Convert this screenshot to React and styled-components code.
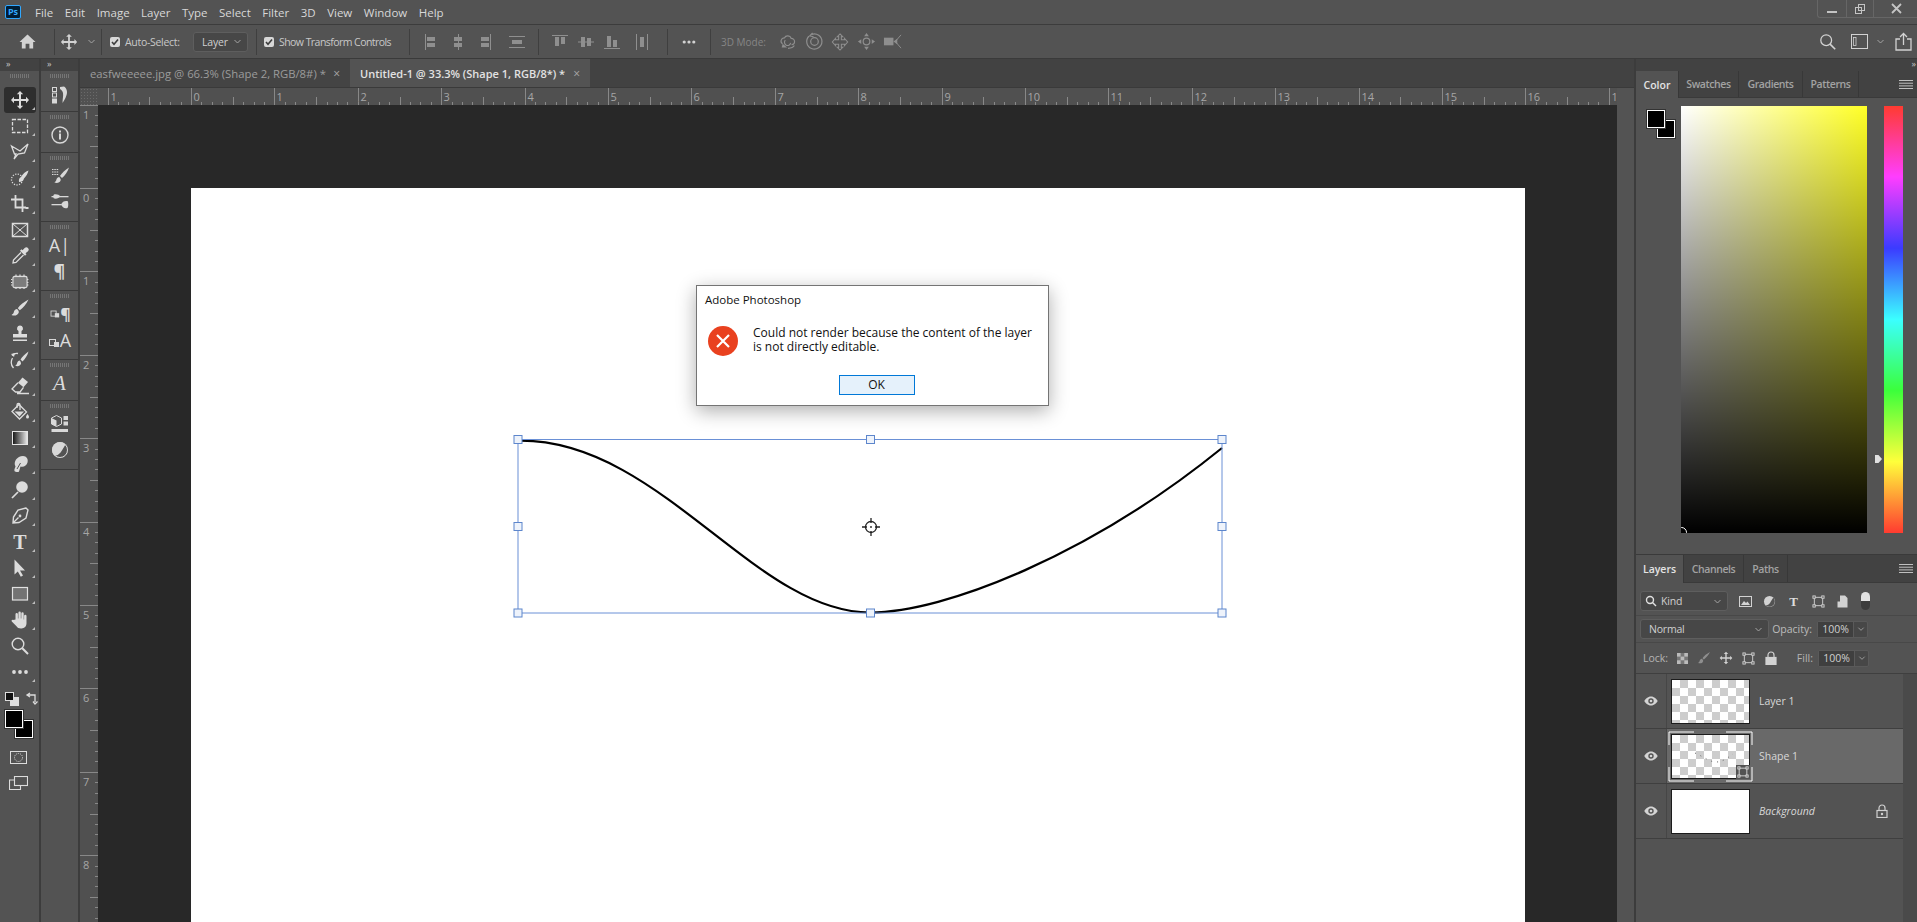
import React from 'react';
import styled, { createGlobalStyle } from 'styled-components';

const GlobalStyle = createGlobalStyle`
  html, body { margin: 0; padding: 0; background: #535353; }
  * { box-sizing: border-box; }
  body { font-family: "Open Sans", "Liberation Sans", sans-serif; overflow: hidden; }
`;

const Page = styled.div`
  width: 1917px;
  height: 922px;
  display: flex;
  flex-direction: column;
  background: #535353;
  color: #d8d8d8;
  overflow: hidden;
`;

/* ---------- menu bar ---------- */
const MenuBar = styled.div`
  height: 25px;
  flex: none;
  display: flex;
  align-items: center;
  border-bottom: 1px solid #3c3c3c;
  padding-left: 5px;
  font-size: 11.5px;
`;
const PsLogo = styled.div`
  width: 16px;
  height: 14px;
  border: 1px solid #31a8ff;
  border-radius: 2px;
  background: #001e36;
  color: #31a8ff;
  font-size: 9px;
  font-weight: 700;
  line-height: 12px;
  text-align: center;
  margin-right: 14px;
`;
const MenuItems = styled.div`
  display: flex;
  gap: 11.5px;
`;
const WindowControls = styled.div`
  margin-left: auto;
  width: 100px;
  height: 18px;
  align-self: flex-start;
  display: grid;
  grid-template-columns: 28px 27px 45px;
  border-left: 1px solid #666;
  border-bottom: 1px solid #666;
  border-radius: 0 0 0 3px;
`;
const WindowButton = styled.div`
  display: flex;
  align-items: center;
  justify-content: center;
  color: #c4c4c4;
  & + & { border-left: 1px solid #666; }
`;

/* ---------- options bar ---------- */
const OptionsBar = styled.div`
  height: 34px;
  flex: none;
  display: flex;
  align-items: center;
  border-bottom: 1px solid #3a3a3a;
  font-size: 11px;
`;
const Slot = styled.div`
  width: ${p => p.$w || 26}px;
  margin-left: ${p => p.$ml || 0}px;
  flex: none;
  display: flex;
  align-items: center;
  justify-content: center;
  color: ${p => p.$dim ? '#8e8e8e' : '#d2d2d2'};
`;
const Sep = styled.div`
  width: 1px;
  height: 26px;
  flex: none;
  margin-left: ${p => p.$ml || 0}px;
  background: #3f3f3f;
`;
const CheckLabel = styled.div`
  width: ${p => p.$w}px;
  margin-left: ${p => p.$ml}px;
  flex: none;
  display: flex;
  align-items: center;
  gap: 5px;
  white-space: nowrap;
  color: #c8c8c8;
  font-size: 10.5px;
  letter-spacing: ${p => p.$ls}px;
`;
const Check = styled.span`
  width: 10px;
  height: 10px;
  flex: none;
  border-radius: 2px;
  background: #d8d8d8;
  color: #3c3c3c;
  display: flex;
  align-items: center;
  justify-content: center;
`;
const Dropdown = styled.div`
  width: ${p => p.$w}px;
  height: ${p => p.$h || 20}px;
  margin-left: ${p => p.$ml || 0}px;
  flex: none;
  display: flex;
  align-items: center;
  justify-content: space-between;
  padding: 0 5px 0 ${p => p.$pl || 8}px;
  background: #474747;
  border: 1px solid #5e5e5e;
  border-radius: 3px;
  color: #d0d0d0;
  font-size: 10.5px;
  letter-spacing: -0.2px;
`;
const DimLabel = styled.div`
  width: 42px;
  margin-left: 10px;
  flex: none;
  color: #868686;
  font-size: 10px;
  white-space: nowrap;
`;
const Spacer = styled.div`
  flex: 1;
`;

/* ---------- workspace ---------- */
const Workspace = styled.div`
  flex: 1;
  min-height: 0;
  display: flex;
`;
const DockColumn = styled.div`
  width: ${p => p.$w}px;
  flex: none;
  display: flex;
  flex-direction: column;
  background: #535353;
  border-right: 2px solid #3c3c3c;
`;
const CollapseStrip = styled.div`
  height: 12px;
  flex: none;
  background: #424242;
  color: #c8c8c8;
  font-size: 9px;
  line-height: 10px;
  padding: 0 ${p => p.$right ? '2px' : '0'} 0 ${p => p.$right ? '0' : '6px'};
  text-align: ${p => p.$right ? 'right' : 'left'};
  letter-spacing: -1px;
`;
const Grip = styled.div`
  width: 19px;
  height: 4px;
  margin: 3px auto 0;
  flex: none;
  background: repeating-linear-gradient(90deg, #757575 0 1px, transparent 1px 2px);
`;
const ToolList = styled.div`
  display: flex;
  flex-direction: column;
  margin-top: 9px;
`;
const ToolSlot = styled.div`
  position: relative;
  height: 26px;
  margin: 0 3px 0 4px;
  display: flex;
  align-items: center;
  justify-content: center;
  border-radius: 3px;
  color: #dcdcdc;
  background: ${p => p.$active ? '#2e2e2e' : 'transparent'};
  &::after {
    content: '';
    display: ${p => p.$corner ? 'block' : 'none'};
    position: absolute;
    right: 1px;
    bottom: 3px;
    border-style: solid;
    border-width: 0 0 3px 3px;
    border-color: transparent transparent #bdbdbd transparent;
  }
`;
const TypeGlyph = styled.span`
  font-family: ${p => p.$serif ? '"Liberation Serif", serif' : '"Open Sans", sans-serif'};
  font-size: ${p => p.$size}px;
  font-weight: ${p => p.$bold ? 700 : 400};
  font-style: ${p => p.$italic ? 'italic' : 'normal'};
  line-height: 1;
  color: #dcdcdc;
`;
const GlyphPair = styled.span`
  display: flex;
  align-items: ${p => p.$end ? 'flex-end' : 'center'};
`;
const ColorBlock = styled.div`
  padding-left: 5px;
  height: 22px;
  margin-top: 3px;
  display: flex;
  align-items: center;
  gap: 6px;
  color: #dcdcdc;
`;
const SwatchStack = styled.div`
  position: relative;
  width: 29px;
  height: 29px;
  margin: 0 0 0 5px;
`;
const Swatch = styled.div`
  position: absolute;
  left: ${p => p.$x}px;
  top: ${p => p.$y}px;
  width: 18px;
  height: 18px;
  background: #000;
  border: 1px solid #fff;
  box-shadow: 0 0 0 1px #333;
`;
const LowerIcon = styled.div`
  height: 26px;
  display: flex;
  align-items: center;
  justify-content: center;
  color: #dcdcdc;
  margin: ${p => p.$mt || 0}px 3px 0 0;
`;
const PanelGroup = styled.div`
  height: ${p => p.$h}px;
  flex: none;
  border-bottom: 1px solid #3a3a3a;
  display: flex;
  flex-direction: column;
`;
const PanelIcons = styled.div`
  margin-top: 3px;
  display: flex;
  flex-direction: column;
`;
const PanelIcon = styled.div`
  height: ${p => p.$h || 26}px;
  display: flex;
  align-items: center;
  justify-content: center;
  color: #d8d8d8;
`;

/* ---------- document area ---------- */
const DocArea = styled.div`
  flex: 1;
  min-width: 0;
  display: flex;
  flex-direction: column;
`;
const TabBar = styled.div`
  height: 29px;
  flex: none;
  display: flex;
  background: #424242;
  border-bottom: 1px solid #3a3a3a;
`;
const DocTab = styled.div`
  width: ${p => p.$w}px;
  flex: none;
  display: flex;
  align-items: center;
  justify-content: space-between;
  padding: 0 10px;
  font-size: ${p => p.$active ? 11 : 11.3}px;
  white-space: nowrap;
  font-weight: ${p => p.$active ? 600 : 400};
  background: ${p => p.$active ? '#535353' : '#444444'};
  color: ${p => p.$active ? '#e2e2e2' : '#9c9c9c'};
`;
const TabClose = styled.span`
  font-size: 12px;
  font-weight: 400;
  color: #a8a8a8;
`;
const DocBody = styled.div`
  flex: 1;
  min-height: 0;
  display: flex;
`;
const Viewport = styled.div`
  flex: 1;
  min-width: 0;
  display: grid;
  grid-template-columns: 18px 1fr;
  grid-template-rows: 17px 1fr;
`;
const RulerCorner = styled.div`
  background: #515151;
  background-image: radial-gradient(#6a6a6a 0.6px, transparent 0.7px);
  background-size: 3px 3px;
`;
const RulerBox = styled.div`
  background: #505050;
  overflow: hidden;
  svg { display: block; }
`;
const Pasteboard = styled.div`
  background: #282828;
  padding: 83px 0 0 93px;
  overflow: hidden;
`;
const Sheet = styled.div`
  position: relative;
  width: 1334px;
  height: 800px;
  background: #fff;
`;
const ScrollTrack = styled.div`
  width: 17px;
  flex: none;
  background: #535353;
`;
const ShapeOverlay = styled.svg`
  position: absolute;
  left: 0;
  top: 0;
`;
const Dialog = styled.div`
  position: absolute;
  left: 505px;
  top: 97px;
  width: 353px;
  height: 121px;
  background: #fff;
  border: 1px solid #747474;
  box-shadow: 0 5px 18px rgba(0, 0, 0, 0.32);
  color: #111;
  display: flex;
  flex-direction: column;
`;
const DialogTitle = styled.div`
  height: 29px;
  padding: 6px 0 0 8px;
  font-size: 11.5px;
`;
const DialogBody = styled.div`
  display: flex;
  padding: 11px 0 0 11px;
  gap: 15px;
`;
const DialogText = styled.div`
  font-size: 12px;
  line-height: 14px;
`;
const DialogFooter = styled.div`
  margin-top: auto;
  padding: 0 0 10px 8px;
  display: flex;
  justify-content: center;
`;
const OkButton = styled.div`
  width: 76px;
  height: 20px;
  background: #e5f1fb;
  border: 1px solid #0078d7;
  font-size: 12px;
  line-height: 18px;
  text-align: center;
`;

/* ---------- right dock ---------- */
const RightDock = styled.div`
  width: 283px;
  flex: none;
  display: flex;
  flex-direction: column;
  border-left: 2px solid #3c3c3c;
`;
const PanelTabs = styled.div`
  height: ${p => p.$h}px;
  flex: none;
  display: flex;
  background: #424242;
  position: relative;
  border-bottom: 1px solid #3a3a3a;
`;
const PanelTab = styled.div`
  width: ${p => p.$w}px;
  flex: none;
  display: flex;
  align-items: center;
  justify-content: center;
  font-size: 10.5px;
  font-weight: 600;
  letter-spacing: ${p => p.$active ? 0 : -0.4}px;
  background: ${p => p.$active ? '#535353' : 'transparent'};
  color: ${p => p.$active ? '#e4e4e4' : '#a2a2a2'};
  border-right: 1px solid #383838;
  margin-bottom: ${p => p.$active ? '-1px' : 0};
`;
const PanelMenu = styled.div`
  margin-left: auto;
  width: 22px;
  display: flex;
  align-items: center;
  justify-content: center;
  color: #c0c0c0;
`;
const ColorBody = styled.div`
  height: 457px;
  flex: none;
  position: relative;
  display: flex;
  padding: 8px 0 0 11px;
  border-bottom: 1px solid #3a3a3a;
`;
const SwatchPair = styled.div`
  position: relative;
  width: 34px;
  height: 32px;
  flex: none;
  margin-top: 4px;
`;
const PickerField = styled.div`
  width: 186px;
  height: 427px;
  flex: none;
  position: relative;
  background:
    linear-gradient(to bottom, rgba(0, 0, 0, 0), #000),
    linear-gradient(to right, #fff, #ffff26);
`;
const PickerDot = styled.div`
  position: absolute;
  left: -5px;
  bottom: -5px;
  width: 11px;
  height: 11px;
  border: 1px solid #fff;
  border-radius: 50%;
  clip-path: inset(0 0 5px 5px);
`;
const HueBar = styled.div`
  width: 19px;
  height: 427px;
  margin-left: 17px;
  flex: none;
  position: relative;
  background: linear-gradient(to bottom, #ff3b30, #ff3dff 16.6%, #3b3bff 33.3%, #3bffff 50%, #3bff3b 66.6%, #ffff3b 83.3%, #ff3b30);
`;
const HueMark = styled.div`
  position: absolute;
  left: -9px;
  top: 349px;
  width: 7px;
  height: 8px;
  background: #e0e0e0;
  clip-path: polygon(0 0, 50% 0, 100% 50%, 50% 100%, 0 100%);
`;
const LayersBody = styled.div`
  flex: 1;
  min-height: 0;
  display: flex;
  flex-direction: column;
`;
const FilterRow = styled.div`
  height: 33px;
  flex: none;
  display: flex;
  align-items: center;
  padding: 4px 0 0 4px;
  border-bottom: 1px solid #484848;
`;
const BlendRow = styled.div`
  height: 27px;
  flex: none;
  display: flex;
  align-items: center;
  padding-left: 4px;
  border-bottom: 1px solid #484848;
  font-size: 10.5px;
  color: #bcbcbc;
`;
const LockRow = styled.div`
  height: 31px;
  flex: none;
  display: flex;
  align-items: center;
  padding-left: 7px;
  border-bottom: 1px solid #3f3f3f;
  font-size: 10.5px;
  color: #b4b4b4;
`;
const KindLabel = styled.span`
  display: flex;
  align-items: center;
  gap: 4px;
`;
const ToggleKnob = styled.div`
  width: 9px;
  height: 18px;
  margin-left: 7px;
  border-radius: 5px;
  background: linear-gradient(to bottom, #e2e2e2 0 9px, #3c3c3c 9px);
`;
const FieldLabel = styled.div`
  width: ${p => p.$w}px;
  margin-left: ${p => p.$ml || 0}px;
  flex: none;
  text-align: ${p => p.$left ? 'left' : 'right'};
  white-space: nowrap;
`;
const PercentField = styled.div`
  width: 51px;
  height: 17px;
  margin-left: 5px;
  flex: none;
  display: flex;
  background: #474747;
  border: 1px solid #5a5a5a;
  border-radius: 2px;
  font-size: 10.5px;
  color: #d0d0d0;
  line-height: 15px;
`;
const PercentValue = styled.div`
  width: 36px;
  text-align: center;
  background: #3f3f3f;
  border-right: 1px solid #5a5a5a;
`;
const PercentArrow = styled.div`
  flex: 1;
  display: flex;
  align-items: center;
  justify-content: center;
`;
const LayerList = styled.div`
  flex: 1;
  display: flex;
`;
const LayerRows = styled.div`
  flex: 1;
`;
const LayerGutter = styled.div`
  width: 14px;
  flex: none;
  background: #4a4a4a;
`;
const LayerRow = styled.div`
  height: 55px;
  display: flex;
  align-items: center;
  border-bottom: 1px solid #3f3f3f;
`;
const EyeCell = styled.div`
  width: 31px;
  height: 100%;
  flex: none;
  display: flex;
  align-items: center;
  justify-content: center;
  color: #d4d4d4;
  border-right: 1px solid #464646;
`;
const LayerMain = styled.div`
  flex: 1;
  height: 100%;
  display: flex;
  align-items: center;
  padding: 0 15px 0 4px;
  background: ${p => p.$selected ? '#696969' : 'transparent'};
`;
const Thumb = styled.div`
  width: 79px;
  height: 45px;
  flex: none;
  position: relative;
  border: 1px solid #1c1c1c;
  background: ${p => p.$plain ? '#fff' : 'repeating-conic-gradient(#cdcdcd 0 25%, #fff 0 50%) 0 0 / 16px 16px'};
`;
const ThumbOverlay = styled.svg`
  position: absolute;
  left: -4px;
  top: -4px;
`;
const ThumbCurveLayer = styled.svg`
  position: absolute;
  left: 0;
  top: 0;
`;
const SmartBadge = styled.div`
  position: absolute;
  right: -1px;
  bottom: -1px;
  width: 14px;
  height: 14px;
  background: #535353;
  display: flex;
  align-items: center;
  justify-content: center;
  color: #e4e4e4;
`;
const LayerName = styled.div`
  margin-left: 9px;
  font-size: 10.5px;
  color: #d8d8d8;
  font-style: ${p => p.$italic ? 'italic' : 'normal'};
`;
const LayerLock = styled.div`
  margin-left: auto;
  color: #d0d0d0;
  display: flex;
`;

/* ---------- icons ---------- */
const Ico = ({ s = 20, vb = '0 0 20 20', children }) => (
  <svg width={s} height={s} viewBox={vb} fill="currentColor">{children}</svg>
);
const Line = (props) => <path fill="none" stroke="currentColor" strokeWidth="1.3" {...props} />;

const Chevron = ({ size = 9 }) => (
  <svg width={size} height={size} viewBox="0 0 9 9" fill="none" stroke="#a4a4a4"><path d="M1.5 3l3 3 3-3" /></svg>
);

const MoveGlyph = ({ s = 20 }) => (
  <Ico s={s}><path d="M10 1l3.2 3.2h-2.2V9h5V6.8L19 10l-3 3.2V11h-5v4.8h2.2L10 19l-3.2-3.2H9V11H4v2.2L1 10l3-3.2V9h5V4.2H6.8z" /></Ico>
);
const BrushGlyph = ({ s = 20 }) => (
  <Ico s={s}><path d="M18.5 1.5C14 4 10 7 7.8 10.2l2 2C13 10 16.5 6 18.5 1.5zM6.8 11c-2 .3-2.8 2-3 3.3-.2 1-1 2-2.3 2.7 3 1.3 6.3.5 7.3-2.5.3-1.2-.8-3-2-3.5z" /></Ico>
);
const EyeGlyph = () => (
  <svg width="14" height="10" viewBox="0 0 14 10" fill="currentColor"><path d="M7 .5C3.8.5 1.3 3 .3 5c1 2 3.5 4.5 6.7 4.5S12.700 7 13.700 5C12.700 3 10.200.5 7 .5zm0 1.800a2.700 2.700 0 110 5.400 2.700 2.700 0 010-5.400z" /><circle cx="7" cy="5" r="1.3" /></svg>
);
const LockGlyph = ({ open }) => (
  <svg width="12" height="14" viewBox="0 0 12 14" fill={open ? 'none' : 'currentColor'} stroke="currentColor" strokeWidth="1.2">
    <path d="M3 6.5V4a3 3 0 016 0v2.5" fill="none" /><rect x="1" y="6.5" width="10" height="7" />
    {open && <circle cx="6" cy="10" r=".6" fill="currentColor" />}
  </svg>
);
const Hamburger = () => (
  <svg width="14" height="9" viewBox="0 0 14 9" fill="currentColor"><rect y="0" width="14" height="1" /><rect y="2.7" width="14" height="1" /><rect y="5.4" width="14" height="1" /><rect y="8" width="14" height="1" /></svg>
);
const TransformGlyph = ({ s = 14 }) => (
  <svg width={s} height={s} viewBox="0 0 14 14" fill="none" stroke="currentColor"><rect x="2.5" y="2.5" width="9" height="9" /><rect x="1" y="1" width="2.5" height="2.5" fill="#535353" /><rect x="10.5" y="1" width="2.5" height="2.5" fill="#535353" /><rect x="1" y="10.5" width="2.5" height="2.5" fill="#535353" /><rect x="10.5" y="10.5" width="2.5" height="2.5" fill="#535353" /></svg>
);

// option bar align icons, drawn as a rule with two bars
const AlignH = ({ rule, a, b }) => (
  <svg width="16" height="16" viewBox="0 0 16 16" fill="#8f8f8f"><rect x={rule} y="0" width="1" height="16" /><rect x={a} y="3" width="8" height="4" /><rect x={b} y="9" width="8" height="4" /></svg>
);
const AlignV = ({ rule, a, b }) => (
  <svg width="16" height="16" viewBox="0 0 16 16" fill="#8f8f8f"><rect y={rule} x="0" width="16" height="1" /><rect y={a} x="3" width="4" height="9" /><rect y={b} x="9" width="4" height="7" /></svg>
);

const tools = [
  { key: 'move', active: true, icon: <MoveGlyph /> },
  { key: 'marquee', icon: <Ico><rect x="2.5" y="3.5" width="15" height="13" fill="none" stroke="currentColor" strokeWidth="1.3" strokeDasharray="3.5 1.5" /></Ico> },
  { key: 'lasso', icon: <Ico><Line d="M1.5 4l8.500 5 8-7-3.500 9-6.500 1-4 5 2-5-1.500 0z" /></Ico> },
  { key: 'quick', icon: <Ico><circle cx="7" cy="11.5" r="5.5" fill="none" stroke="currentColor" strokeWidth="1.3" strokeDasharray="1.2 1.4" /><path d="M18.5 2.5c-3 1-6 3.800-7.500 6.500-1.500.5-2.500 2.500-2 5 2.500 0 4.500-1 5-3.500 2-2 3.800-5 4.500-8z" /></Ico> },
  { key: 'crop', icon: <Ico><path fill="none" stroke="currentColor" strokeWidth="1.8" d="M5.5 1v12.500H16M1 5.500h11.500V18M15.500 14h3" /></Ico> },
  { key: 'frame', icon: <Ico><rect x="2.5" y="3.5" width="15" height="13" fill="none" stroke="currentColor" strokeWidth="1.5" /><Line strokeWidth="1" d="M3 4l14 12M17 4L3 16" /></Ico> },
  { key: 'dropper', icon: <Ico><path d="M18 2a2.300 2.300 0 00-3.300 0l-2.200 2.200-1-1-1.500 1.500 5 5 1.500-1.500-1-1L18 5.300a2.300 2.300 0 000-3.300z" /><Line d="M11 6.500L3.500 14l-.5 3 3-.5L13.500 9" /></Ico> },
  { key: 'healing', icon: <Ico><rect x="4" y="5.5" width="12" height="9" fill="#7c7c7c" /><rect x="3" y="4.5" width="14" height="11" rx="1.5" fill="none" stroke="currentColor" strokeWidth="1.3" /><Line strokeWidth="1.2" strokeDasharray="1.4 1.6" d="M1 7.500H3M1 10.500H3M1 13H3M17 7.500H19M17 10.500H19M17 13H19M6 2.500V4.500M10 2.500V4.500M14 2.500V4.500M6 15.500V17.500M10 15.500V17.500M14 15.500V17.500" /></Ico> },
  { key: 'brush', icon: <BrushGlyph /> },
  { key: 'stamp', icon: <Ico><path d="M10 1.5a3 3 0 011.500 5.600V10H17v3.500H3V10h5.500V7.100A3 3 0 0110 1.500zM3 15.500h14V17H3z" /></Ico> },
  { key: 'history', icon: <Ico><path d="M18.5 1.5C15 4 12 7 10.500 9.500l2 2C15 9 17.500 5.500 18.500 1.500zM9.500 10.500c-1.800.3-2.300 2-2.500 3-.2.8-.8 1.800-1.800 2.300 2.300 1 5 .4 5.800-2 .2-1-.5-2.800-1.500-3.300z" /><Line d="M2 5.500c2-2 4-2.500 6-2M3.500 18C1 15 .8 11 2.500 8" /><path d="M1 4l4-1-1 4z" /></Ico> },
  { key: 'eraser', icon: <Ico><path d="M12.5 1.5L18 6l-4.500 5.300L8 6.800z" /><Line d="M8 6.800L2 13l3.500 3H10l3.500-4.700M7 17.500h12" /></Ico> },
  { key: 'bucket', icon: <Ico><path d="M2 9.500L9 2.500l7.500 7.500-7 7z" fill="none" stroke="currentColor" strokeWidth="1.3" /><path d="M4.500 9.500h9.500l-4.500 5z" /><Line d="M7 6V3a1.500 1.500 0 013 0v5" /><path d="M17.500 12c1 1.500 1.500 2.300 1.500 3a1.500 1.500 0 01-3 0c0-.7.500-1.500 1.500-3z" /></Ico> },
  { key: 'gradient', icon: <Ico><defs><linearGradient id="toolGrad"><stop offset="0" stopColor="#111" /><stop offset="1" stopColor="#eee" /></linearGradient></defs><rect x="2.5" y="3.5" width="15" height="13" fill="url(#toolGrad)" stroke="#e4e4e4" /></Ico> },
  { key: 'smudge', icon: <Ico><path d="M13 2c3.500 0 5.500 3 4.500 6.500-.8 3.200-4 5-7 4l-1.500 5c-.5 1-4 .5-4.500-.5-.5-1.500.5-3 1-4.500C3 8 7 2 13 2z" /><path d="M7 15l3.500-6" fill="none" stroke="#535353" /></Ico> },
  { key: 'dodge', icon: <Ico><circle cx="12" cy="7" r="5.8" /><Line strokeWidth="1.7" d="M8 12l-6 6" /></Ico> },
  { key: 'pen', icon: <Ico><Line strokeWidth="1.4" d="M16 2L8 4 3.500 11 3 17l6-.5 7-4.500 2-8zM3.500 16.500l5-5" /><circle cx="10" cy="10" r="1.4" /></Ico> },
  { key: 'type', icon: <TypeGlyph $serif $bold $size={20}>T</TypeGlyph> },
  { key: 'path', icon: <Ico><path d="M4.5 1.500l10.500 11h-5l3 5-2.200 1.200-3-5.200-3.300 3z" /></Ico> },
  { key: 'rect', icon: <Ico><rect x="2.5" y="3.5" width="15" height="12.5" fill="#737373" stroke="#e0e0e0" strokeWidth="1.2" /></Ico> },
  { key: 'hand', icon: <Ico><path d="M5.500 9.500V4.300a1.200 1.200 0 012.400 0V8.500h.5V2.700a1.200 1.200 0 012.400 0V8.500h.5V3.500a1.200 1.200 0 012.400 0V9.500h.4V6a1.200 1.200 0 012.400 0v7.300c0 3-2 5.200-5 5.200H11c-2.300 0-3.500-1-4.500-2.300L1.800 11.500c-.8-1 .6-2.300 1.700-1.400z" /></Ico> },
  { key: 'zoom', corner: false, icon: <Ico><circle cx="8" cy="8" r="5.8" fill="none" stroke="currentColor" strokeWidth="1.4" /><Line strokeWidth="2" d="M12.300 12.300L18 18" /></Ico> },
  { key: 'more', icon: <Ico><circle cx="4" cy="10" r="1.9" /><circle cx="10" cy="10" r="1.9" /><circle cx="16" cy="10" r="1.9" /></Ico> },
];

const SmallSquares = () => (
  <>
    <rect x="3.5" y="10.5" width="6" height="6" fill="none" stroke="currentColor" />
    <rect x="8" y="13" width="5" height="5" />
  </>
);

const panelGroups = [
  { h: 41, pad: 28, icons: [<Ico key="h"><rect x="2.5" y="2.5" width="4" height="4" fill="none" stroke="currentColor" /><rect x="2.5" y="8" width="4" height="4" fill="none" stroke="currentColor" /><rect x="2" y="13.5" width="5" height="5" /><path d="M10 2l4-.5c3 2 4 6 2 10-.5 2-2 4-3.500 6.500 0-4 1-7 .5-10-.3-1.800-1.500-3-3-4z" /></Ico>] },
  { h: 41, pad: 26, icons: [<Ico key="i"><circle cx="10" cy="10" r="8" fill="none" stroke="currentColor" strokeWidth="1.4" /><rect x="9" y="8.5" width="2" height="6" /><rect x="9" y="5.5" width="2" height="2" /></Ico>] },
  { h: 69, icons: [
    <Ico key="bp"><Line strokeWidth="1" strokeDasharray="1.5 .8" d="M2 3.500h7M2 6h7M2 8.500h7" /><path d="M19 1.500C15 4 12 7 10 10l2 2C15 9.500 17.500 6 19 1.500zM9 11c-1.800.3-2.500 2-2.700 3-.2 1-.9 1.800-2 2.500 2.600 1 5.500.4 6.400-2.300.2-1-.7-2.700-1.700-3.200z" /></Ico>,
    <Ico key="bs"><rect x="1.5" y="4" width="17" height="1.3" /><rect x="1.5" y="12" width="10" height="1.3" /><path d="M4 2.500c3-.5 5 .5 6.500 2-1.500 1.500-3.500 2.500-6.500 2-1-.5-1-3.500 0-4zM17.500 9c1 1 1 5.500 0 7-3 1-5-.5-6.500-3.500 1.500-3 3.500-4 6.500-3.500z" /></Ico>,
  ] },
  { h: 69, icons: [
    <GlyphPair key="a"><TypeGlyph $size={18}>A</TypeGlyph><TypeGlyph $size={18}>|</TypeGlyph></GlyphPair>,
    <TypeGlyph key="p" $size={18} $bold>¶</TypeGlyph>,
  ] },
  { h: 69, icons: [
    <GlyphPair key="ps"><Ico s={12} vb="0 8 14 12"><SmallSquares /></Ico><TypeGlyph $size={16} $bold>¶</TypeGlyph></GlyphPair>,
    <GlyphPair key="cs" $end><Ico s={12} vb="2 8 12 12"><SmallSquares /></Ico><TypeGlyph $size={18}>A</TypeGlyph></GlyphPair>,
  ] },
  { h: 41, pad: 26, icons: [<TypeGlyph key="g" $serif $italic $size={21}>A</TypeGlyph>] },
  { h: 69, icons: [
    <Ico key="3d"><path d="M6.5 1.500l5 2.500v6l-5 2.500-5-2.500V4z" fill="none" stroke="currentColor" /><path d="M6.5 6.500v6l-5-2.500V4zM13.500 2h4.500v4h-4.500zM13.500 7.500h4.500v4h-4.500z" /><rect x="1.5" y="15" width="16.5" height="3" /></Ico>,
    <Ico key="adj"><circle cx="10" cy="10" r="8" /><path d="M15.700 4.300A8 8 0 014.300 15.700c3 0 4-1 6-3s2.500-4 5.400-8.400z" fill="#535353" /><circle cx="10" cy="10" r="7.5" fill="none" stroke="currentColor" /></Ico>,
  ] },
];

/* ---------- rulers ---------- */
const UNIT = 83.4;

const HorizontalRuler = () => {
  const origin = 93;
  const ticks = [];
  for (let i = -12; i <= 18 * 8; i++) {
    const x = Math.round(origin + (i * UNIT) / 8) + 0.5;
    if (x < 0 || x > 1520) continue;
    const len = i % 8 === 0 ? 17 : i % 4 === 0 ? 8 : 3;
    ticks.push(<path key={i} d={`M${x} ${17 - len}V17`} stroke="#888" />);
    if (i % 8 === 0) {
      ticks.push(<text key={`t${i}`} x={x + 2} y={13} fontSize="11" fill="#a6a6a6" fontFamily="Open Sans, sans-serif" stroke="#505050" strokeWidth="3" paintOrder="stroke">{Math.abs(i / 8)}</text>);
    }
  }
  return <svg width="1519" height="17">{ticks}</svg>;
};

const VerticalRuler = () => {
  const origin = 83;
  const ticks = [];
  for (let i = -8; i <= 10 * 8; i++) {
    const y = Math.round(origin + (i * UNIT) / 8) + 0.5;
    if (y < 0 || y > 820) continue;
    const len = i % 8 === 0 ? 18 : i % 4 === 0 ? 8 : 3;
    ticks.push(<path key={i} d={`M${18 - len} ${y}H18`} stroke="#888" />);
    if (i % 8 === 0) {
      ticks.push(<text key={`t${i}`} x={3} y={y + 13} fontSize="11" fill="#a6a6a6" fontFamily="Open Sans, sans-serif">{Math.abs(i / 8)}</text>);
    }
  }
  return <svg width="18" height="820">{ticks}</svg>;
};

const handleSpots = [
  [518, 439.5], [870.5, 439.5], [1222, 439.5],
  [518, 526.5], [1222, 526.5],
  [518, 613], [870.5, 613], [1222, 613],
];

const ShapeOnCanvas = () => (
  <ShapeOverlay width="1334" height="734" viewBox="191 188 1334 734">
    <path d="M521 440.7C660 440.7 755 612.500 870 612.500C945 612.500 1090 555 1222 448" fill="none" stroke="#000" strokeWidth="2.2" />
    <rect x="518" y="439.5" width="704" height="173.5" fill="none" stroke="#6a90d6" strokeWidth="1" />
    {handleSpots.map(([x, y]) => (
      <rect key={`${x}-${y}`} x={x - 4} y={y - 4} width="8" height="8" fill="#eef3fb" stroke="#5d86cc" />
    ))}
    <g fill="none" stroke="#222" strokeWidth="1.3">
      <circle cx="871" cy="527" r="5.5" />
      <path d="M871 518v5M871 531v5M862 527h5M875 527h5" />
    </g>
    <circle cx="871" cy="527" r="0.9" fill="#222" />
  </ShapeOverlay>
);

const ThumbCurve = () => (
  <ThumbCurveLayer width="77" height="43" fill="none" stroke="#666" strokeWidth="1" strokeDasharray="1 5">
    <path d="M23 18C32 22 38 27 44 27S54 24 61 19" />
  </ThumbCurveLayer>
);

const menuNames = ['File', 'Edit', 'Image', 'Layer', 'Type', 'Select', 'Filter', '3D', 'View', 'Window', 'Help'];

const App = () => (
  <Page>
    <GlobalStyle />
    <MenuBar>
      <PsLogo>Ps</PsLogo>
      <MenuItems>
        {menuNames.map(m => <span key={m}>{m}</span>)}
      </MenuItems>
      <WindowControls>
        <WindowButton><svg width="10" height="10"><rect y="7" width="10" height="2" fill="currentColor" /></svg></WindowButton>
        <WindowButton><svg width="12" height="12" fill="none" stroke="currentColor"><rect x="1.5" y="4.5" width="6" height="6" /><rect x="4.5" y="1.5" width="6" height="6" /></svg></WindowButton>
        <WindowButton><svg width="11" height="11" stroke="currentColor" strokeWidth="1.8"><path d="M1 1l9 9M10 1l-9 9" /></svg></WindowButton>
      </WindowControls>
    </MenuBar>

    <OptionsBar>
      <Slot $w={54}><Ico s={17} vb="0 0 18 18"><path d="M9 1.500L17.500 9.500H15V16.500H11V11.500H7V16.500H3V9.500H.5z" /></Ico></Slot>
      <Sep />
      <Slot $w={27}><MoveGlyph s={18} /></Slot>
      <Slot $w={19}><Chevron /></Slot>
      <Sep />
      <CheckLabel $w={68} $ml={8} $ls={-0.3}>
        <Check><svg width="8" height="8" fill="none" stroke="currentColor" strokeWidth="1.6"><path d="M1 4l2 2.200L7 1.500" /></svg></Check>
        Auto-Select:
      </CheckLabel>
      <Dropdown $w={55} $ml={15}>Layer <Chevron /></Dropdown>
      <Sep $ml={8} />
      <CheckLabel $w={128} $ml={7} $ls={-0.55}>
        <Check><svg width="8" height="8" fill="none" stroke="currentColor" strokeWidth="1.6"><path d="M1 4l2 2.200L7 1.500" /></svg></Check>
        Show Transform Controls
      </CheckLabel>
      <Sep $ml={17} />
      <Slot $ml={9}><AlignH rule={1} a={3} b={3} /></Slot>
      <Slot><AlignH rule={8} a={4} b={4} /></Slot>
      <Slot><AlignH rule={14} a={5} b={5} /></Slot>
      <Slot $ml={7}><svg width="16" height="16" viewBox="0 0 16 16" fill="#8f8f8f"><rect y="2" width="16" height="1" /><rect y="13" width="16" height="1" /><rect x="3" y="6" width="10" height="4" /></svg></Slot>
      <Sep $ml={8} />
      <Slot $ml={8}><AlignV rule={1} a={3} b={3} /></Slot>
      <Slot><svg width="16" height="16" viewBox="0 0 16 16" fill="#8f8f8f"><rect y="7.5" width="16" height="1" /><rect x="3" y="3" width="4" height="10" /><rect x="9" y="4" width="4" height="8" /></svg></Slot>
      <Slot><svg width="16" height="16" viewBox="0 0 16 16" fill="#8f8f8f"><rect y="14" width="16" height="1" /><rect x="3" y="2" width="4" height="11" /><rect x="9" y="6" width="4" height="7" /></svg></Slot>
      <Slot $ml={4}><svg width="16" height="16" viewBox="0 0 16 16" fill="#8f8f8f"><rect x="2" width="1" height="16" /><rect x="13" width="1" height="16" /><rect x="6" y="3" width="4" height="10" /></svg></Slot>
      <Sep $ml={12} />
      <Slot $w={42}><Ico s={16}><circle cx="4" cy="10" r="2" /><circle cx="10" cy="10" r="2" /><circle cx="16" cy="10" r="2" /></Ico></Slot>
      <Sep />
      <DimLabel>3D Mode:</DimLabel>
      <Slot $ml={12} $dim><Ico s={18}><Line d="M4 12a3.500 3.500 0 012-6.500 4 4 0 017.500.5 3.500 3.500 0 01.500 7M7 8a3.500 3.500 0 106 3M17 14c-1 2-3 3-7 3" /><path d="M4 12l5 4H3z" /></Ico></Slot>
      <Slot $dim><Ico s={19}><circle cx="10" cy="10" r="4" fill="none" stroke="currentColor" strokeWidth="1.3" /><Line d="M7 2.500a8 8 0 11-3 2M8 1L5 4l4 1" /></Ico></Slot>
      <Slot $dim><Ico s={18}><path fill="none" stroke="currentColor" strokeWidth="1.2" d="M10 1l3 3h-1.500v3.500H15V6l3.500 4-3.500 4v-1.500h-3.500V16H13l-3 3-3-3h1.500v-3.500H5V14l-3.500-4L5 6v1.500h3.500V4H7z" /></Ico></Slot>
      <Slot $dim><Ico s={19}><path d="M10 1l2.500 3.500h-5zM10 19l-2.500-3.500h5zM1 10l3.500-2.500v5zM19 10l-3.500-2.500v5z" /><circle cx="10" cy="10" r="3.5" fill="none" stroke="currentColor" strokeWidth="1.3" /></Ico></Slot>
      <Slot $dim><Ico s={19}><rect x="1" y="6" width="10" height="8" /><path d="M11 10l4-3v6z" /><Line strokeWidth="1" d="M19 3l-6 7 6 7" /></Ico></Slot>
      <Spacer />
      <Slot><Ico s={18}><circle cx="8" cy="8" r="6" fill="none" stroke="currentColor" strokeWidth="1.4" /><Line strokeWidth="1.8" d="M12.300 12.300L18 18" /></Ico></Slot>
      <Slot $ml={5}><svg width="17" height="15" viewBox="0 0 17 15" fill="none" stroke="currentColor"><rect x=".5" y=".5" width="16" height="14" /><rect x="2.5" y="3.5" width="2.5" height="8" strokeWidth=".8" /></svg></Slot>
      <Slot $w={16}><Chevron /></Slot>
      <Slot $w={22} $ml={4}><svg width="17" height="19" viewBox="0 0 17 19" fill="none" stroke="currentColor" strokeWidth="1.3"><path d="M5 7H1v11h15V7h-4M8.500 13V1.500M5 5l3.500-3.500L12 5" /></svg></Slot>
      <Slot $w={3} />
    </OptionsBar>

    <Workspace>
      <DockColumn $w={41}>
        <CollapseStrip>››</CollapseStrip>
        <Grip />
        <ToolList>
          {tools.map(t => (
            <ToolSlot key={t.key} $active={t.active} $corner={t.corner !== false}>{t.icon}</ToolSlot>
          ))}
        </ToolList>
        <ColorBlock>
          <svg width="14" height="14" viewBox="0 0 14 14"><rect x="5" y="5" width="9" height="9" fill="#ddd" /><rect x=".5" y=".5" width="8" height="8" fill="#111" stroke="#ddd" /></svg>
          <svg width="14" height="14" viewBox="0 0 14 14" fill="none" stroke="currentColor" strokeWidth="1.3"><path d="M5 1L2 3l3 2M2 3h8v7M8 9.500l2 2.500 2.500-2.500" /></svg>
        </ColorBlock>
        <SwatchStack>
          <Swatch $x={10} $y={10} />
          <Swatch $x={0} $y={0} />
        </SwatchStack>
        <LowerIcon $mt={5}><svg width="17" height="13" viewBox="0 0 17 13" fill="none" stroke="currentColor"><rect x=".5" y=".5" width="16" height="12" /><circle cx="8.5" cy="6.5" r="4" strokeDasharray="1 1" /></svg></LowerIcon>
        <LowerIcon><svg width="19" height="14" viewBox="0 0 19 14" fill="none" stroke="currentColor" strokeWidth="1.1"><rect x="5.5" y=".5" width="13" height="9" /><path d="M5.500 4H.5v9.500h11v-4" /></svg></LowerIcon>
      </DockColumn>

      <DockColumn $w={39}>
        <CollapseStrip>››</CollapseStrip>
        {panelGroups.map((g, i) => (
          <PanelGroup key={i} $h={g.h}>
            <Grip />
            <PanelIcons>
              {g.icons.map((icon, j) => <PanelIcon key={j} $h={g.pad}>{icon}</PanelIcon>)}
            </PanelIcons>
          </PanelGroup>
        ))}
      </DockColumn>

      <DocArea>
        <TabBar>
          <DocTab $w={270}>easfweeeee.jpg @ 66.3% (Shape 2, RGB/8#) *<TabClose>×</TabClose></DocTab>
          <DocTab $w={240} $active>Untitled-1 @ 33.3% (Shape 1, RGB/8*) *<TabClose>×</TabClose></DocTab>
        </TabBar>
        <DocBody>
          <Viewport>
            <RulerCorner />
            <RulerBox><HorizontalRuler /></RulerBox>
            <RulerBox><VerticalRuler /></RulerBox>
            <Pasteboard>
              <Sheet>
                <ShapeOnCanvas />
                <Dialog>
                  <DialogTitle>Adobe Photoshop</DialogTitle>
                  <DialogBody>
                    <svg width="30" height="30" viewBox="0 0 30 30">
                      <circle cx="15" cy="15" r="15" fill="#e9411f" />
                      <path d="M9 9l12 12M21 9L9 21" stroke="#fff" strokeWidth="2.2" />
                    </svg>
                    <DialogText>Could not render because the content of the layer<br />is not directly editable.</DialogText>
                  </DialogBody>
                  <DialogFooter><OkButton>OK</OkButton></DialogFooter>
                </Dialog>
              </Sheet>
            </Pasteboard>
          </Viewport>
          <ScrollTrack />
        </DocBody>
      </DocArea>

      <RightDock>
        <CollapseStrip $right>››</CollapseStrip>
        <PanelTabs $h={27}>
          <PanelTab $w={43} $active>Color</PanelTab>
          <PanelTab $w={60}>Swatches</PanelTab>
          <PanelTab $w={64}>Gradients</PanelTab>
          <PanelTab $w={56}>Patterns</PanelTab>
          <PanelMenu><Hamburger /></PanelMenu>
        </PanelTabs>
        <ColorBody>
          <SwatchPair>
            <Swatch $x={10} $y={10} />
            <Swatch $x={0} $y={0} />
          </SwatchPair>
          <PickerField><PickerDot /></PickerField>
          <HueBar><HueMark /></HueBar>
        </ColorBody>
        <PanelTabs $h={28}>
          <PanelTab $w={48} $active>Layers</PanelTab>
          <PanelTab $w={60}>Channels</PanelTab>
          <PanelTab $w={44}>Paths</PanelTab>
          <PanelMenu><Hamburger /></PanelMenu>
        </PanelTabs>
        <LayersBody>
          <FilterRow>
            <Dropdown $w={88} $pl={4}>
              <KindLabel>
                <svg width="12" height="12" viewBox="0 0 12 12" fill="none" stroke="#e0e0e0" strokeWidth="1.4"><circle cx="5" cy="5" r="3.5" /><path d="M7.500 7.500L11 11" /></svg>
                Kind
              </KindLabel>
              <Chevron />
            </Dropdown>
            <Slot $w={24} $ml={5}><svg width="13" height="11" viewBox="0 0 13 11" fill="none" stroke="currentColor"><rect x=".5" y=".5" width="12" height="10" /><path d="M2 9l3-4 2 2 1.500-1.500L11 9z" fill="currentColor" stroke="none" /></svg></Slot>
            <Slot $w={24}><Ico s={13}><circle cx="10" cy="10" r="8.5" /><path d="M16 4a8.500 8.500 0 01-12 12c3 0 5-1 7-4s3-5 5-8z" fill="#535353" /></Ico></Slot>
            <Slot $w={25}><TypeGlyph $serif $bold $size={13}>T</TypeGlyph></Slot>
            <Slot $w={24}><TransformGlyph s={13} /></Slot>
            <Slot $w={24}><svg width="11" height="13" viewBox="0 0 11 13" fill="currentColor"><path d="M4 .5h4L10.500 3v9.500H5V7H3V.5zM.5 6.500h5.500v6H.5z" /></svg></Slot>
            <ToggleKnob />
          </FilterRow>
          <BlendRow>
            <Dropdown $w={129}>Normal <Chevron /></Dropdown>
            <FieldLabel $w={43}>Opacity:</FieldLabel>
            <PercentField><PercentValue>100%</PercentValue><PercentArrow><Chevron size={8} /></PercentArrow></PercentField>
          </BlendRow>
          <LockRow>
            <FieldLabel $w={26} $left>Lock:</FieldLabel>
            <Slot $w={22} $ml={2}><svg width="11" height="11" viewBox="0 0 11 11"><rect width="11" height="11" fill="#777" /><rect width="3.6" height="3.6" fill="#bbb" /><rect x="7.3" width="3.6" height="3.6" fill="#bbb" /><rect x="3.6" y="3.6" width="3.7" height="3.7" fill="#bbb" /><rect y="7.3" width="3.6" height="3.7" fill="#bbb" /><rect x="7.3" y="7.3" width="3.7" height="3.7" fill="#bbb" /></svg></Slot>
            <Slot $w={22} $dim><BrushGlyph s={14} /></Slot>
            <Slot $w={22}><MoveGlyph s={14} /></Slot>
            <Slot $w={23}><TransformGlyph s={13} /></Slot>
            <Slot $w={22}><LockGlyph /></Slot>
            <FieldLabel $w={31}>Fill:</FieldLabel>
            <PercentField><PercentValue>100%</PercentValue><PercentArrow><Chevron size={8} /></PercentArrow></PercentField>
          </LockRow>
          <LayerList>
            <LayerRows>
              <LayerRow>
                <EyeCell><EyeGlyph /></EyeCell>
                <LayerMain><Thumb /><LayerName>Layer 1</LayerName></LayerMain>
              </LayerRow>
              <LayerRow>
                <EyeCell><EyeGlyph /></EyeCell>
                <LayerMain $selected>
                  <Thumb>
                    <ThumbCurve />
                    <ThumbOverlay width="85" height="51" fill="none" stroke="#fff" strokeWidth="1">
                      <path d="M1 14V1H26M58 1H84V14M84 36V50H58M26 50H1V36" />
                    </ThumbOverlay>
                    <SmartBadge><TransformGlyph s={12} /></SmartBadge>
                  </Thumb>
                  <LayerName>Shape 1</LayerName>
                </LayerMain>
              </LayerRow>
              <LayerRow>
                <EyeCell><EyeGlyph /></EyeCell>
                <LayerMain>
                  <Thumb $plain />
                  <LayerName $italic>Background</LayerName>
                  <LayerLock><LockGlyph open /></LayerLock>
                </LayerMain>
              </LayerRow>
            </LayerRows>
            <LayerGutter />
          </LayerList>
        </LayersBody>
      </RightDock>
    </Workspace>
  </Page>
);

export default App;
